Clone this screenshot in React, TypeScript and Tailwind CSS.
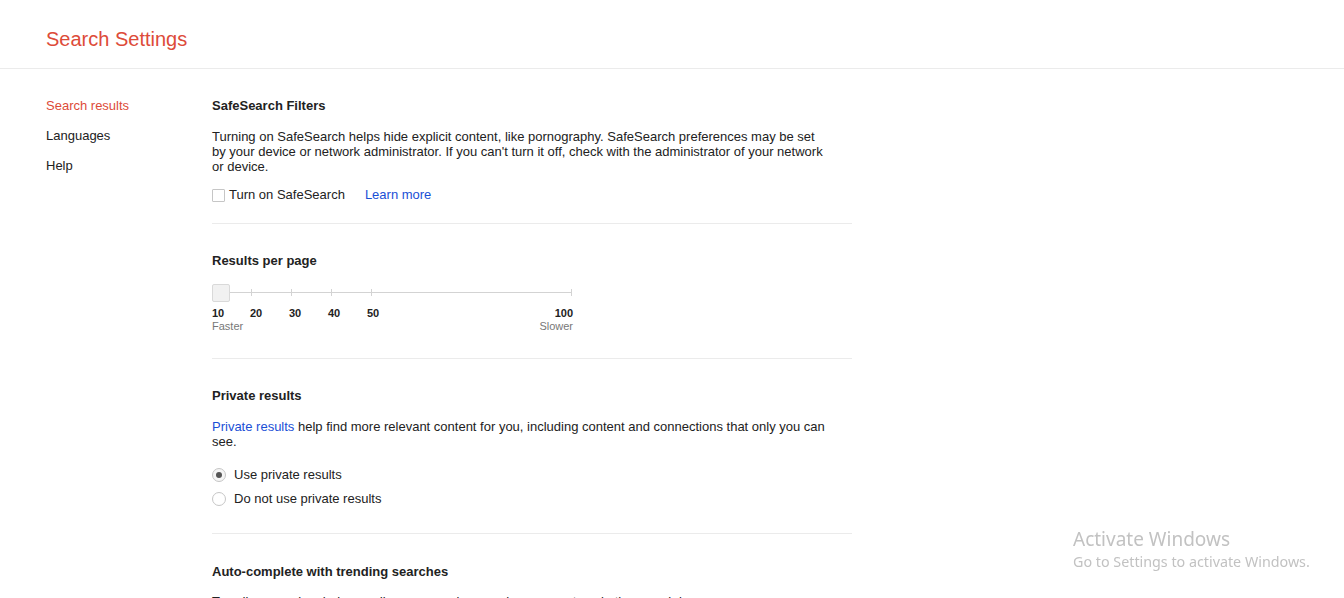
export default function App() {
  return (
    <div className="min-h-screen bg-white font-['Liberation_Sans',Arial,sans-serif] text-[13px] text-[#222]">
      {/* Header */}
      <header className="h-[69px] border-b border-[#ebebeb] pl-[46px] pt-[27px]">
        <h1 className="text-[20px] leading-[24px] text-[#dd4b39]">Search Settings</h1>
      </header>

      <div className="flex">
        {/* Side nav */}
        <nav className="w-[212px] shrink-0 pl-[46px] pt-[22px]">
          <div className="leading-[30px] text-[#dd4b39]">Search results</div>
          <div className="leading-[30px]">Languages</div>
          <div className="leading-[30px]">Help</div>
        </nav>

        {/* Main */}
        <main className="w-[640px]">
          <section className="border-b border-[#ebebeb] pt-[29px] pb-[20px]">
            <h2 className="font-bold leading-[16px]">SafeSearch Filters</h2>
            <p className="mt-[15px] w-[620px] leading-[15px]">
              Turning on SafeSearch helps hide explicit content, like pornography. SafeSearch preferences may be set
              by your device or network administrator. If you can't turn it off, check with the administrator of your network
              or device.
            </p>
            <div className="mt-[13px] flex h-[16px] items-center">
              <span className="h-[13px] w-[13px] rounded-[1px] border border-[#c6c6c6] bg-white" />
              <span className="ml-[4px]">Turn on SafeSearch</span>
              <a className="ml-[20px] text-[#1a4fd6]">Learn more</a>
            </div>
          </section>

          <section className="border-b border-[#ebebeb] pt-[29px] pb-[25px]">
            <h2 className="font-bold leading-[16px]">Results per page</h2>
            <div className="relative mt-[15px] h-[18px] w-[361px]">
              <div className="absolute left-[18px] right-[2px] top-[8px] h-px bg-[#d3d3d3]" />
              <div className="absolute left-[39px] top-[5px] h-[7px] w-px bg-[#d3d3d3]" />
              <div className="absolute left-[79px] top-[5px] h-[7px] w-px bg-[#d3d3d3]" />
              <div className="absolute left-[119px] top-[5px] h-[7px] w-px bg-[#d3d3d3]" />
              <div className="absolute left-[159px] top-[5px] h-[7px] w-px bg-[#d3d3d3]" />
              <div className="absolute left-[359px] top-[5px] h-[7px] w-px bg-[#d3d3d3]" />
              <div className="absolute left-0 top-0 h-[18px] w-[18px] rounded-[2px] border border-[#d9d9d9] bg-[#f1f1f1]" />
            </div>
            <div className="mt-[5px] flex w-[361px] text-[11px] font-bold leading-[13px]">
              <span className="w-[38px]">10</span>
              <span className="w-[39px]">20</span>
              <span className="w-[39px]">30</span>
              <span className="w-[39px]">40</span>
              <span className="flex-1">50</span>
              <span>100</span>
            </div>
            <div className="flex w-[361px] justify-between text-[11px] leading-[13px] text-[#777]">
              <span>Faster</span>
              <span>Slower</span>
            </div>
          </section>

          <section className="border-b border-[#ebebeb] pt-[29px] pb-[26px]">
            <h2 className="font-bold leading-[16px]">Private results</h2>
            <p className="mt-[15px] w-[620px] leading-[15px]">
              <a className="text-[#1a4fd6]">Private results</a> help find more relevant content for you, including content and connections that only you can
              see.
            </p>
            <div className="mt-[18px] flex h-[16px] items-center">
              <span className="flex h-[14px] w-[14px] items-center justify-center rounded-full border border-[#c6c6c6] bg-[#f5f5f5]">
                <span className="h-[6px] w-[6px] rounded-full bg-[#555]" />
              </span>
              <span className="ml-[8px]">Use private results</span>
            </div>
            <div className="mt-[8px] flex h-[16px] items-center">
              <span className="h-[14px] w-[14px] rounded-full border border-[#c6c6c6] bg-white" />
              <span className="ml-[8px]">Do not use private results</span>
            </div>
          </section>

          <section className="pt-[30px] pb-[30px]">
            <h2 className="font-bold leading-[16px]">Auto-complete with trending searches</h2>
            <p className="mt-[14px] w-[620px] leading-[15px]">
              Trending searches help you discover popular searches as you type in the search box.
            </p>
          </section>
        </main>
      </div>

      {/* Windows watermark */}
      <div className="pointer-events-none fixed left-[1073px] top-[527px] font-['Noto_Sans','Open_Sans',sans-serif] text-[#c2c2c2]">
        <div className="text-[19px] leading-[24px]">Activate Windows</div>
        <div className="text-[14.3px] leading-[21px]">Go to Settings to activate Windows.</div>
      </div>
    </div>
  );
}
